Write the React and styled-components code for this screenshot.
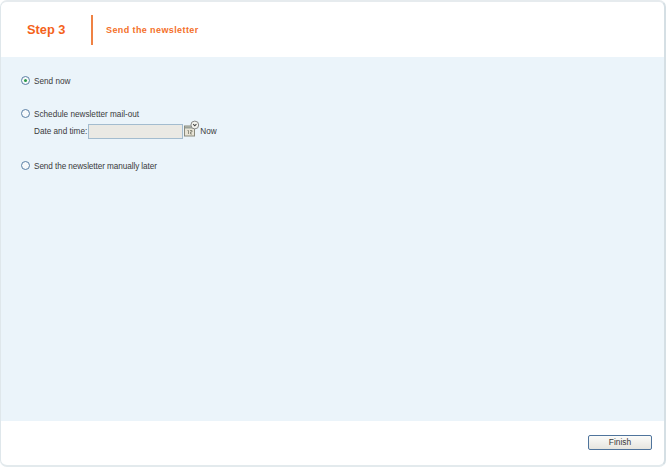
import React from "react";
import styled, { createGlobalStyle } from "styled-components";

const Global = createGlobalStyle`
  html, body { margin: 0; padding: 0; background: #fff; }
  body { font-family: "Liberation Sans", Arial, sans-serif; }
`;

const Frame = styled.div`
  width: 666px;
  height: 467px;
  box-sizing: border-box;
  display: flex;
  flex-direction: column;
  background: #fff;
  border: 1px solid #dfe7eb;
  border-top: 2px solid #e6ebee;
  border-right: 2px solid #d5dfe4;
  border-bottom: 2px solid #e3eaed;
  border-radius: 7px;
  overflow: hidden;
`;

const Header = styled.header`
  height: 55px;
  flex: none;
  display: flex;
  align-items: center;
  padding-left: 26px;
`;

const Step = styled.div`
  width: 64px;
  font-size: 12.8px;
  font-weight: bold;
  color: #f4621a;
`;

const Divider = styled.div`
  width: 2px;
  height: 30px;
  background: #ef8244;
  margin-right: 13px;
`;

const Title = styled.div`
  font-size: 9px;
  font-weight: bold;
  color: #f4702a;
  letter-spacing: 0.4px;
`;

const Content = styled.main`
  flex: 1;
  background: #ebf4fa;
  padding: 17px 20px 0;
  display: flex;
  flex-direction: column;
`;

const Option = styled.label`
  display: flex;
  align-items: center;
  gap: 4px;
  height: 14px;
  font-size: 8.2px;
  letter-spacing: ${(p) => p.$tight || 0}px;
  color: #3a3a3a;
  margin-bottom: ${(p) => p.$after}px;
`;

const Radio = styled.span`
  width: 9px;
  height: 9px;
  flex: none;
  box-sizing: border-box;
  margin-bottom: 2px;
  border-radius: 50%;
  border: 1px solid #5a7fa5;
  background: #f6f9fb;
  display: flex;
  align-items: center;
  justify-content: center;
  &::after {
    content: "";
    display: ${(p) => (p.$on ? "block" : "none")};
    width: 3px;
    height: 3px;
    border-radius: 50%;
    background: #2c9a48;
  }
`;

const DateRow = styled.div`
  display: flex;
  align-items: center;
  height: 16px;
  margin: 2px 0 20px 13px;
  font-size: 8.2px;
  color: #3a3a3a;
`;

const DateInput = styled.input`
  width: 95px;
  height: 15px;
  box-sizing: border-box;
  margin: 0 1px 0 1px;
  padding: 0;
  border: 1px solid #a3bccf;
  background: #eae9e4;
`;

const PickerIcon = styled.svg`
  width: 16px;
  height: 17px;
  flex: none;
  margin: 0 0 5px 0;
`;

const Footer = styled.footer`
  height: 44px;
  flex: none;
  display: flex;
  align-items: center;
  justify-content: flex-end;
  padding: 0 12px 2px 0;
  box-sizing: border-box;
`;

const FinishButton = styled.button`
  width: 64px;
  height: 15px;
  padding: 0;
  border: 1px solid #4f749c;
  border-radius: 2px;
  background: linear-gradient(#fbfbf9, #e6e5df);
  font-family: inherit;
  font-size: 8.4px;
  color: #3a3a3a;
`;

function Picker() {
  return (
    <PickerIcon viewBox="0 0 16 17">
      <rect x="0.5" y="6" width="10" height="10" fill="#e8e4d6" stroke="#8a8a7c" />
      <rect x="1" y="6.5" width="9" height="2" fill="#9aa29a" />
      <path d="M3.5 10.5h1v3.5M6 10.5h2V12H6.5v2H8" fill="none" stroke="#77786c" strokeWidth="0.8" />
      <circle cx="10.8" cy="5" r="3.9" fill="#f3f3ee" stroke="#888" />
      <path d="M9.2 4.2 10.8 5.8 12.4 4.2" fill="none" stroke="#444" strokeWidth="1.1" />
    </PickerIcon>
  );
}

export default function App() {
  return (
    <>
      <Global />
      <Frame>
        <Header>
          <Step>Step 3</Step>
          <Divider />
          <Title>Send the newsletter</Title>
        </Header>
        <Content>
          <Option $after={19}>
            <Radio $on />
            Send now
          </Option>
          <Option $after={0}>
            <Radio />
            Schedule newsletter mail-out
          </Option>
          <DateRow>
            Date and time:
            <DateInput readOnly />
            <Picker />
            Now
          </DateRow>
          <Option $after={0} $tight={-0.08}>
            <Radio />
            Send the newsletter manually later
          </Option>
        </Content>
        <Footer>
          <FinishButton>Finish</FinishButton>
        </Footer>
      </Frame>
    </>
  );
}
